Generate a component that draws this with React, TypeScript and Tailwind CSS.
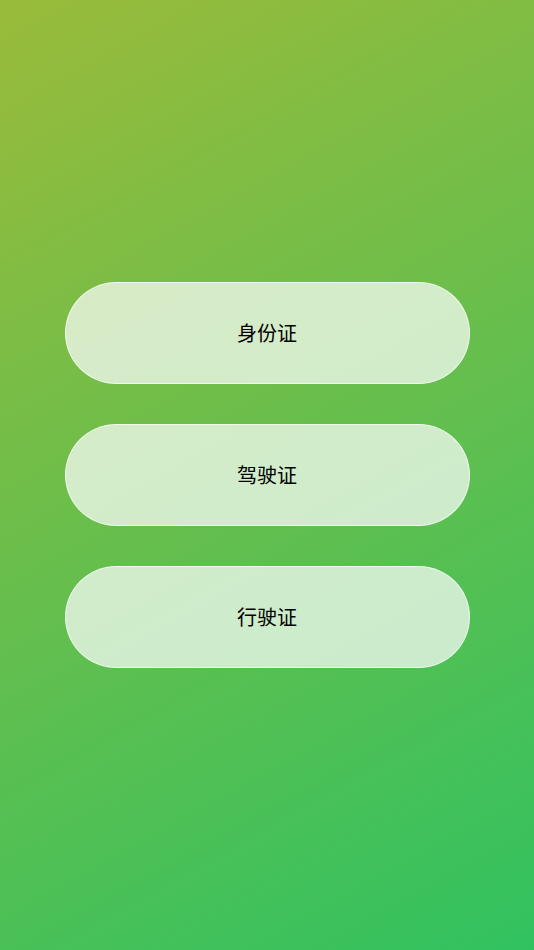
import React from 'react';

const items = ['身份证', '驾驶证', '行驶证'];

const App: React.FC = () => {
  return (
    <div
      className="flex min-h-screen w-full flex-col items-center justify-center gap-10 bg-[linear-gradient(151deg,#9abb3a,#31c260)]"
      style={{ fontFamily: '"Noto Sans CJK SC", "Noto Sans", sans-serif' }}
    >
      {items.map((label) => (
        <button
          key={label}
          className="flex h-[102px] w-[405px] items-center justify-center rounded-full border border-white/70 bg-white/70 text-[20px] text-black"
        >
          {label}
        </button>
      ))}
    </div>
  );
};

export default App;
